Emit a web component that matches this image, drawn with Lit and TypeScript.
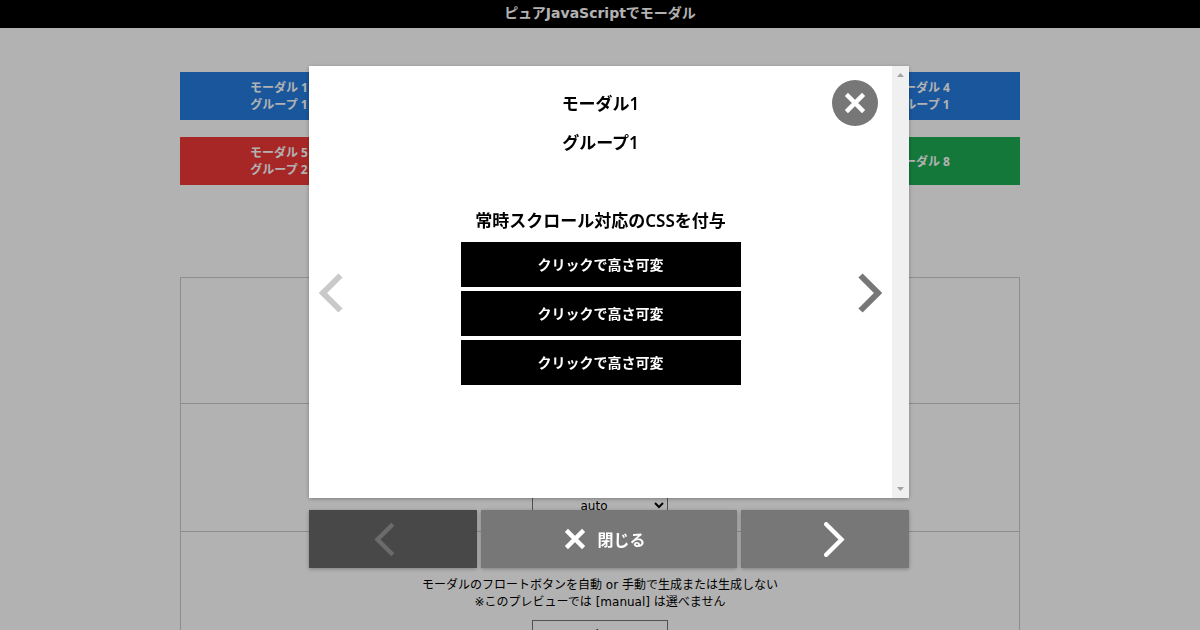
import { LitElement, html, css, svg } from "lit";
import { customElement, property, state } from "lit/decorators.js";

const tiles = [
  { name: "モーダル 1", group: "グループ 1", tone: "blue" },
  { name: "モーダル 2", group: "グループ 1", tone: "blue" },
  { name: "モーダル 3", group: "グループ 1", tone: "blue" },
  { name: "モーダル 4", group: "グループ 1", tone: "blue" },
  { name: "モーダル 5", group: "グループ 2", tone: "red" },
  { name: "モーダル 6", group: "グループ 2", tone: "red" },
  { name: "モーダル 7", group: "グループ 2", tone: "red" },
  { name: "モーダル 8", group: "", tone: "green" },
];

const chevron = (dir: string, cap: string, width: number) => html`
  <svg class="chevron" viewBox="0 0 24 40" aria-hidden="true">
    ${svg`<path d=${dir === "left" ? "M21.5 2.5L4 20L21.5 37.5" : "M2.5 2.5L20 20L2.5 37.5"}
      fill="none" stroke="currentColor" stroke-width=${width} stroke-linecap=${cap} />`}
  </svg>`;

const cross = html`
  <svg class="cross" viewBox="0 0 22 22" aria-hidden="true">
    <path d="M2.4 2.4L19.6 19.6M19.6 2.4L2.4 19.6" fill="none" stroke="currentColor" stroke-width="4.4" />
  </svg>`;

@customElement("modal-window")
class ModalWindow extends LitElement {
  @property() heading = "";
  @property() group = "";

  static styles = css`
    :host {
      position: fixed;
      inset: 0;
      z-index: 10;
      box-sizing: border-box;
      display: flex;
      flex-direction: column;
      align-items: center;
      gap: 12px;
      padding: 66px 16px 62px 34px;
      background: rgba(0, 0, 0, 0.3);
    }
    * { box-sizing: border-box; }
    button {
      font: inherit;
      border: 0;
      margin: 0;
      padding: 0;
      cursor: pointer;
    }
    svg { display: block; }
    .window {
      position: relative;
      display: flex;
      flex: 1;
      min-height: 0;
      width: 100%;
      max-width: 600px;
      background: #fff;
      box-shadow: 0 1px 4px rgba(0, 0, 0, 0.3);
    }
    .body {
      position: relative;
      flex: 1;
      display: flex;
      flex-direction: column;
      align-items: center;
      padding-top: 18px;
      overflow: hidden;
      font-family: "Noto Sans", "Noto Sans CJK JP", sans-serif;
      font-weight: 600;
      font-size: 17px;
      line-height: 39px;
      color: #000;
    }
    h2, p { margin: 0; font: inherit; }
    .note { margin-top: 39px; padding-bottom: 2px; }
    .list {
      display: flex;
      flex-direction: column;
      gap: 4px;
      width: 280px;
      max-width: 80%;
    }
    .item {
      height: 45px;
      background: #000;
      color: #fff;
      font-size: 14px;
      font-weight: 700;
      line-height: 20px;
    }
    .close {
      position: absolute;
      top: 14px;
      right: 14px;
      width: 46px;
      height: 46px;
      border-radius: 50%;
      background: #777;
      color: #fff;
      display: grid;
      place-items: center;
    }
    .cross { width: 22px; height: 22px; }
    .arrow {
      position: absolute;
      top: 207px;
      background: none;
      color: #777;
    }
    .prev { left: 10px; }
    .next { right: 10px; }
    .arrow:disabled { color: #c9c9c9; cursor: default; }
    .chevron { width: 24px; height: 40px; }
    .scroll {
      width: 17px;
      background: #f0f0f0;
      color: #a3a3a3;
      display: flex;
      flex-direction: column;
      justify-content: space-between;
      align-items: center;
      padding: 7px 0;
    }
    .scroll svg { width: 7px; height: 4px; }
    .bar {
      display: grid;
      grid-template-columns: 168fr 256fr 168fr;
      gap: 4px;
      width: 100%;
      max-width: 600px;
      height: 58px;
    }
    .bar button {
      display: flex;
      align-items: center;
      justify-content: center;
      gap: 11px;
      background: #777;
      color: #fff;
      font-family: "Noto Sans CJK JP", sans-serif;
      font-size: 16px;
      font-weight: 700;
      box-shadow: 0 1px 4px rgba(0, 0, 0, 0.3);
    }
    .bar button:disabled { background: #484848; color: #6b6b6b; cursor: default; }
    .bar .chevron { width: 21px; height: 35px; }
    .bar .back { padding-right: 18px; }
    .bar .shut { padding-right: 8px; }
    .bar .forward { padding-left: 18px; }
  `;

  render() {
    return html`
      <section class="window" role="dialog" aria-modal="true" aria-label=${this.heading}>
        <div class="body">
          <h2>${this.heading}</h2>
          <p>${this.group}</p>
          <p class="note">常時スクロール対応のCSSを付与</p>
          <div class="list">
            ${[1, 2, 3].map(() => html`<button class="item">クリックで高さ可変</button>`)}
          </div>
          <button class="arrow prev" disabled aria-label="前へ">${chevron("left", "butt", 6)}</button>
          <button class="arrow next" aria-label="次へ">${chevron("right", "butt", 6)}</button>
          <button class="close" aria-label="閉じる">${cross}</button>
        </div>
        <div class="scroll" aria-hidden="true">
          <svg viewBox="0 0 7 4"><path d="M0 4L3.5 0L7 4Z" fill="currentColor" /></svg>
          <svg viewBox="0 0 7 4"><path d="M0 0L3.5 4L7 0Z" fill="currentColor" /></svg>
        </div>
      </section>
      <nav class="bar">
        <button class="back" disabled aria-label="前へ">${chevron("left", "butt", 5)}</button>
        <button class="shut">${cross}<span>閉じる</span></button>
        <button class="forward" aria-label="次へ">${chevron("right", "round", 5)}</button>
      </nav>`;
  }
}

@customElement("app-root")
class AppRoot extends LitElement {
  @state() current = { heading: "モーダル1", group: "グループ1" };

  static styles = css`
    :host {
      display: block;
      height: 100vh;
      overflow: hidden;
      background: #fff;
      color: #000;
      font-family: "DejaVu Sans", "Noto Sans CJK JP", sans-serif;
      font-size: 12px;
      line-height: 17px;
    }
    * { box-sizing: border-box; }
    .top {
      margin: 0;
      height: 28px;
      background: #000;
      color: #fff;
      font-size: 14px;
      font-weight: 700;
      line-height: 26px;
      text-align: center;
    }
    .main {
      max-width: 840px;
      margin: 44px auto 0;
    }
    .tiles {
      display: grid;
      grid-template-columns: repeat(4, 1fr);
      gap: 17px 16px;
    }
    .tile {
      height: 48px;
      border: 0;
      padding: 0;
      color: #fff;
      font: inherit;
      font-family: "Noto Sans", "Noto Sans CJK JP", sans-serif;
      font-weight: 700;
      cursor: pointer;
    }
    .tile span { display: block; }
    .blue { background: #257ce0; }
    .red { background: #f03939; }
    .green { background: #1dac54; }
    .options {
      margin-top: 92px;
      border: 1px solid #ccc;
      border-bottom: 0;
    }
    .row {
      display: flex;
      flex-direction: column;
      align-items: center;
      justify-content: flex-end;
      gap: 9px;
      min-height: 126px;
      padding-bottom: 12px;
      border-bottom: 1px solid #ccc;
      text-align: center;
    }
    .row.tall { min-height: 128px; }
    select {
      width: 136px;
      height: 27px;
      border: 1px solid #767676;
      border-radius: 0;
      background: #fff;
      color: #000;
      font: inherit;
      text-align: center;
      text-align-last: center;
    }
  `;

  render() {
    return html`
      <h1 class="top">ピュアJavaScriptでモーダル</h1>
      <main class="main">
        <div class="tiles">
          ${tiles.map((t) => html`
            <button class="tile ${t.tone}">
              <span>${t.name}</span>${t.group ? html`<span>${t.group}</span>` : ""}
            </button>`)}
        </div>
        <div class="options">
          <div class="row"></div>
          <div class="row tall">
            <select aria-label="スクロール"><option>auto</option></select>
          </div>
          <div class="row tall">
            <label for="float">モーダルのフロートボタンを自動 or 手動で生成または生成しない<br />※このプレビューでは [manual] は選べません</label>
            <select id="float"><option>auto</option></select>
          </div>
        </div>
      </main>
      <modal-window heading=${this.current.heading} group=${this.current.group}></modal-window>`;
  }
}
